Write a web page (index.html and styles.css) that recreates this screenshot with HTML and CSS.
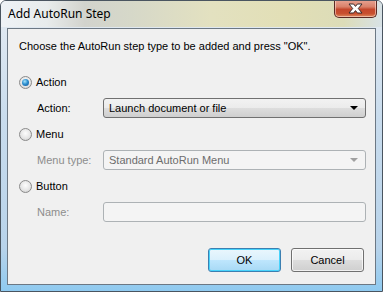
FILE: index.html
```html
<!DOCTYPE html>
<html lang="en">
<head>
    <meta charset="UTF-8">
    <title>Add AutoRun Step</title>
    <link rel="stylesheet" href="styles.css">
</head>
<body>
    <div class="window">
        <div class="titlebar">
            <span class="title">Add AutoRun Step</span>
            <button class="close" title="Close">
                <svg width="15" height="11" viewBox="0 0 15 11">
                    <path d="M1 1h4.6l1.9 2.4 1.9-2.4h4.6l-3.7 4.5 3.7 4.5h-4.6l-1.9-2.4-1.9 2.4h-4.6l3.7-4.5z" fill="#fff" stroke="#3a2a2a" stroke-width="1" stroke-linejoin="round"/>
                </svg>
            </button>
        </div>

        <div class="client">
            <p class="intro">Choose the AutoRun step type to be added and press "OK".</p>

            <div class="group">
                <label class="radio-row">
                    <span class="radio checked"></span>
                    <span>Action</span>
                </label>
                <div class="field-row">
                    <span class="field-label">Action:</span>
                    <div class="combo">
                        <span>Launch document or file</span>
                        <span class="arrow"></span>
                    </div>
                </div>
            </div>

            <div class="group">
                <label class="radio-row">
                    <span class="radio"></span>
                    <span>Menu</span>
                </label>
                <div class="field-row disabled">
                    <span class="field-label">Menu type:</span>
                    <div class="combo">
                        <span>Standard AutoRun Menu</span>
                        <span class="arrow"></span>
                    </div>
                </div>
            </div>

            <div class="group">
                <label class="radio-row">
                    <span class="radio"></span>
                    <span>Button</span>
                </label>
                <div class="field-row disabled">
                    <span class="field-label">Name:</span>
                    <div class="textbox"></div>
                </div>
            </div>

            <div class="buttons">
                <button class="btn default">OK</button>
                <button class="btn">Cancel</button>
            </div>
        </div>
    </div>
</body>
</html>
```

FILE: styles.css
```css
html, body {
    margin: 0;
    padding: 0;
    background: #fff;
}
body {
    font-family: "Liberation Sans", Arial, sans-serif;
    font-size: 11px;
    color: #000;
}
.window {
    width: 383px;
    height: 292px;
    box-sizing: border-box;
    border: 1px solid #4a5560;
    border-radius: 6px 6px 0 0;
    background: linear-gradient(180deg, #e6edf4 0px, #dfe8f1 26px, #c9dced 40%, #b8d3ea 85%, #8fcaf0 100%);
    display: flex;
    flex-direction: column;
    overflow: hidden;
}
.titlebar {
    height: 26px;
    display: flex;
    align-items: flex-start;
    padding-left: 7px;
    background: linear-gradient(90deg, #eef2f6 0%, #e8ecec 12%, #d2d3cd 22%, #d6d8c9 34%, #e3e1c0 55%, #e2dfb6 75%, #dcdcb8 90%, #d8e2e6 100%);
}
.title {
    font-family: "Noto Sans", "Liberation Sans", sans-serif;
    font-size: 12px;
    line-height: 16px;
    margin-top: 5px;
    color: #000;
}
.close {
    margin-left: auto;
    margin-right: 5px;
    width: 43px;
    height: 18px;
    margin-top: -1px;
    padding: 0;
    border: 1px solid #5a2a24;
    border-top: none;
    border-radius: 0 0 5px 5px;
    background: linear-gradient(180deg, #e8a493 0%, #d9816a 40%, #c4472c 55%, #c8502f 80%, #dd8a5e 100%);
    box-shadow: inset 0 0 0 1px rgba(255,230,220,0.55);
    display: flex;
    align-items: center;
    justify-content: center;
}
.client {
    flex: 1;
    margin: 1px 6px 6px 6px;
    border: 1px solid #6c7884;
    background: #f0f0f0;
    padding: 0 9px 0 11px;
    display: flex;
    flex-direction: column;
}
.intro {
    margin: 10px 0 0 0;
    line-height: 14px;
}
.group {
    height: 52px;
}
.group:first-of-type {
    margin-top: 21px;
}
.radio-row {
    display: flex;
    align-items: center;
    height: 16px;
    gap: 4px;
}
.radio {
    width: 11px;
    height: 11px;
    border-radius: 50%;
    border: 1px solid #8a8a8a;
    background: radial-gradient(circle at 50% 40%, #fdfdfd 0%, #e6e6e6 55%, #c9c9c9 100%);
    position: relative;
}
.radio.checked::after {
    content: "";
    position: absolute;
    left: 2px;
    top: 2px;
    width: 7px;
    height: 7px;
    border-radius: 50%;
    background: radial-gradient(circle at 40% 35%, #a6e4fb 0%, #2d8fd0 45%, #0f4f8f 100%);
}
.field-row {
    display: flex;
    align-items: center;
    margin-top: 8px;
    height: 20px;
    padding-left: 18px;
}
.field-label {
    width: 66px;
}
.combo, .textbox {
    width: 263px;
    height: 20px;
    box-sizing: border-box;
    border: 1px solid #707070;
    border-radius: 3px;
    background: linear-gradient(180deg, #f2f2f2 0%, #ebebeb 50%, #dddddd 51%, #cfcfcf 100%);
    display: flex;
    align-items: center;
    padding: 0 7px 0 5px;
}
.combo span:first-child {
    flex: 1;
}
.arrow {
    width: 0;
    height: 0;
    border-left: 4px solid transparent;
    border-right: 4px solid transparent;
    border-top: 4px solid #000;
}
.disabled .field-label {
    color: #8d8d8d;
}
.disabled .combo, .disabled .textbox {
    border-color: #adb2b5;
    background: #f4f4f4;
    color: #6d6d6d;
}
.disabled .arrow {
    border-top-color: #a0a0a0;
}
.buttons {
    display: flex;
    justify-content: flex-end;
    gap: 10px;
    margin-top: 18px;
    padding-right: 2px;
}
.btn {
    width: 73px;
    height: 24px;
    font-family: "Liberation Sans", Arial, sans-serif;
    font-size: 11px;
    border: 1px solid #707070;
    border-radius: 3px;
    background: linear-gradient(180deg, #f2f2f2 0%, #ebebeb 50%, #dddddd 51%, #cfcfcf 100%);
    box-shadow: inset 0 0 0 1px rgba(255,255,255,0.7);
    padding: 0;
}
.btn.default {
    border-color: #3c7fb1;
    background: linear-gradient(180deg, #eaf6fd 0%, #d9f0fc 50%, #bee6fd 51%, #a7d9f5 100%);
    box-shadow: inset 0 0 0 1px #48d3fb;
}
```
